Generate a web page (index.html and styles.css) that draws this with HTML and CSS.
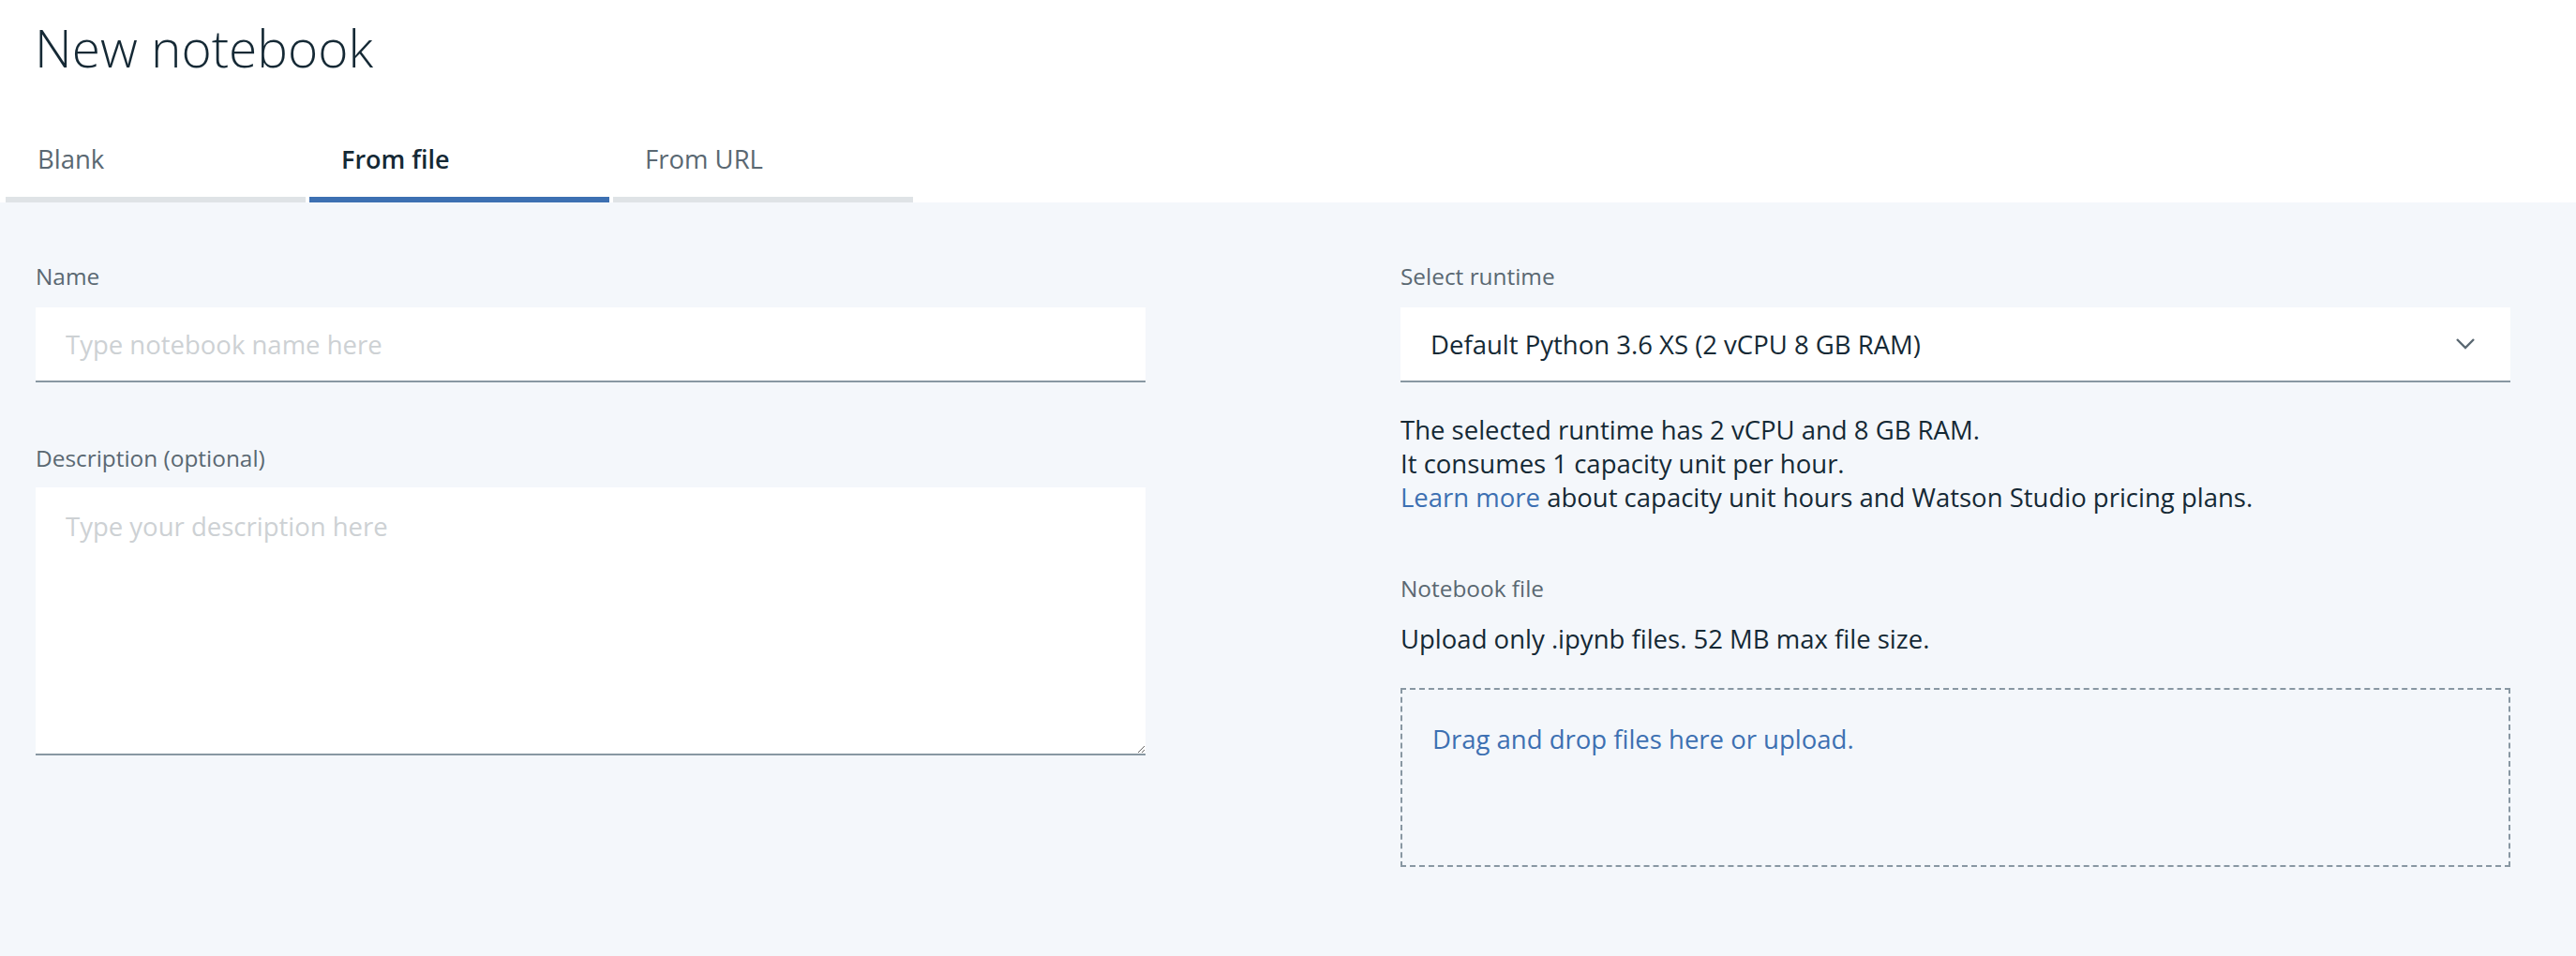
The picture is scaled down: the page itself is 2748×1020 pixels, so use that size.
FILE: index.html
```html
<!DOCTYPE html>
<html lang="en">
<head>
<meta charset="utf-8">
<title>New notebook</title>
<link rel="stylesheet" href="styles.css">
</head>
<body>
<header class="page-header">
  <h1 class="page-title">New notebook</h1>
  <nav class="tabs">
    <div class="tab">Blank</div>
    <div class="tab tab--selected">From file</div>
    <div class="tab">From URL</div>
  </nav>
</header>
<main class="form">
  <section class="column">
    <div class="field">
      <label class="label">Name</label>
      <input class="text-input" type="text" placeholder="Type notebook name here">
    </div>
    <div class="field field--desc">
      <label class="label">Description (optional)</label>
      <textarea class="text-area" placeholder="Type your description here"></textarea>
    </div>
  </section>
  <section class="column">
    <div class="field">
      <label class="label">Select runtime</label>
      <div class="select">
        <span class="select-value">Default Python 3.6 XS (2 vCPU 8 GB RAM)</span>
        <svg class="chevron" width="20" height="12" viewBox="0 0 20 12" aria-hidden="true"><polyline points="1,1 10,10 19,1" fill="none" stroke="#5a6872" stroke-width="2.4"/></svg>
      </div>
      <p class="helper">The selected runtime has 2 vCPU and 8 GB RAM.<br>It consumes 1 capacity unit per hour.<br><a class="link" href="#">Learn more</a> about capacity unit hours and Watson Studio pricing plans.</p>
    </div>
    <div class="field field--file">
      <label class="label">Notebook file</label>
      <p class="file-note">Upload only .ipynb files. 52 MB max file size.</p>
      <div class="dropzone"><span class="link">Drag and drop files here or upload.</span></div>
    </div>
  </section>
</main>
</body>
</html>
```
FILE: styles.css
```css
html, body {
  margin: 0;
  padding: 0;
}
body {
  background: #f4f7fb;
  font-family: "Open Sans", "Liberation Sans", sans-serif;
  color: #152935;
  min-height: 1020px;
}
.page-header {
  background: #ffffff;
  padding-top: 18px;
}
.page-title {
  margin: 0;
  padding-left: 37px;
  font-size: 55px;
  font-weight: 300;
  line-height: 66px;
  color: #152935;
}
.tabs {
  display: flex;
  gap: 4px;
  padding-left: 6px;
  margin-top: 43px;
}
.tab {
  width: 320px;
  box-sizing: border-box;
  padding: 25px 0 22px 34px;
  font-size: 27.5px;
  line-height: 36px;
  color: #5a6872;
  border-bottom: 6px solid #dfe3e6;
}
.tab--selected {
  color: #152935;
  font-weight: 600;
  font-size: 27px;
  border-bottom-color: #3d70b2;
}
.form {
  display: grid;
  grid-template-columns: 1184px 1184px;
  column-gap: 272px;
  padding: 63px 70px 0 38px;
}
.field {
  display: flex;
  flex-direction: column;
}
.label {
  font-size: 24.4px;
  line-height: 32px;
  color: #5a6872;
  margin-bottom: 17px;
}
.field--desc {
  margin-top: 65px;
}
.field--desc .label {
  margin-bottom: 15px;
}
.text-input, .text-area, .select {
  box-sizing: border-box;
  width: 100%;
  background: #ffffff;
  border: 0;
  border-bottom: 2px solid #8897a2;
  font-family: inherit;
  font-size: 27.5px;
  color: #152935;
  outline: none;
}
.text-input {
  height: 80px;
  padding: 0 32px;
}
.text-area {
  height: 286px;
  padding: 24px 32px;
  line-height: 36px;
  display: block;
}
.text-input::placeholder, .text-area::placeholder {
  color: #cdd1d4;
}
.select {
  height: 80px;
  padding: 0 38px 0 32px;
  display: flex;
  align-items: center;
  justify-content: space-between;
}
.chevron {
  display: block;
}
.helper {
  margin: 33px 0 0;
  font-size: 27.5px;
  line-height: 36px;
}
.link {
  color: #3d70b2;
  text-decoration: none;
}
.field--file {
  margin-top: 63px;
}
.field--file .label {
  margin-bottom: 20px;
}
.file-note {
  margin: 0;
  font-size: 27.5px;
  line-height: 36px;
}
.dropzone {
  margin-top: 34px;
  height: 191px;
  box-sizing: border-box;
  border: 2px dashed #8897a2;
  padding: 35px 32px;
  font-size: 27.5px;
  line-height: 36px;
}
```
